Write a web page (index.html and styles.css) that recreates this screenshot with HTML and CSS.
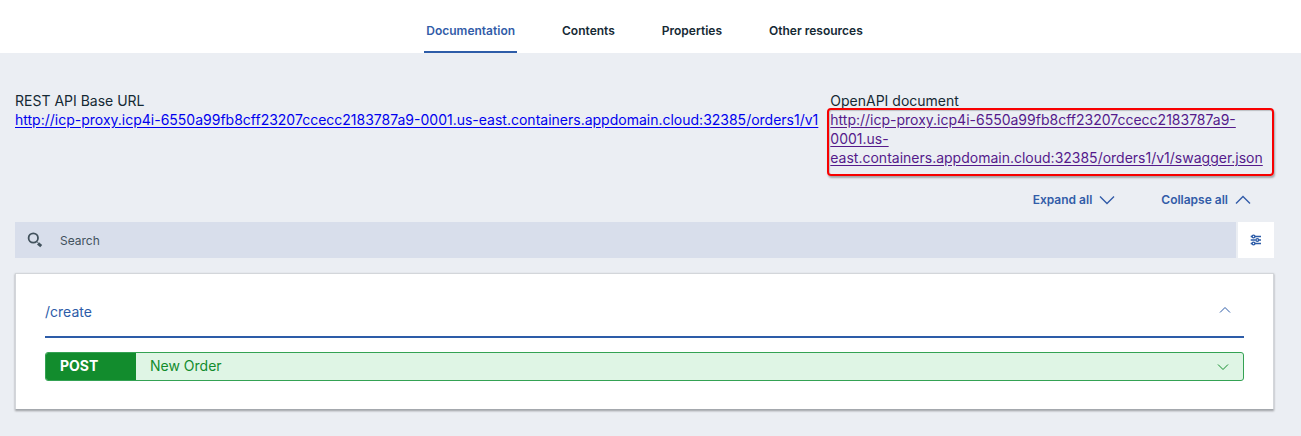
FILE: index.html
```html
<!DOCTYPE html>
<html lang="en">
<head>
<meta charset="utf-8">
<meta name="viewport" content="width=device-width, initial-scale=1">
<title>API documentation</title>
<link rel="stylesheet" href="styles.css">
</head>
<body>
<nav class="tabs" aria-label="Sections">
  <a class="tab tab-active" href="#documentation" aria-current="page">Documentation</a>
  <a class="tab" href="#contents">Contents</a>
  <a class="tab" href="#properties">Properties</a>
  <a class="tab" href="#resources">Other resources</a>
</nav>
<main class="content" id="documentation">
  <section class="urls">
    <div class="url-base">
      <div>REST API Base URL</div>
      <a class="link" href="#base">http://icp-proxy.icp4i-6550a99fb8cff23207ccecc2183787a9-0001.us-east.containers.appdomain.cloud:32385/orders1/v1</a>
    </div>
    <div class="url-doc">
      <div>OpenAPI document</div>
      <div class="highlighted">
        <a class="link link-visited" href="#swagger">http://icp-proxy.icp4i-6550a99fb8cff23207ccecc2183787a9-<wbr>0001.us-<wbr>east.containers.appdomain.cloud:32385/orders1/v1/swagger.json</a>
      </div>
    </div>
  </section>
  <div class="toolbar">
    <button class="text-button" type="button">Expand all
      <svg width="16" height="10" viewBox="0 0 16 10" aria-hidden="true"><path d="M1 1.5 8 8.5 15 1.5"/></svg>
    </button>
    <button class="text-button" type="button">Collapse all
      <svg width="16" height="10" viewBox="0 0 16 10" aria-hidden="true"><path d="M1 8.5 8 1.5 15 8.5"/></svg>
    </button>
  </div>
  <form class="search" role="search">
    <label class="search-field">
      <svg class="search-icon" width="16" height="16" viewBox="0 0 16 16" aria-hidden="true"><circle cx="6.3" cy="6" r="4.7"/><path class="neck" d="m9.600 9.400 1.400 1.400"/><path class="handle" d="m11 11.400 3.200 2.800"/></svg>
      <input class="search-input" type="text" placeholder="Search" aria-label="Search">
    </label>
    <button class="filter" type="button" aria-label="Filter">
      <svg width="12" height="12" viewBox="0 0 12 12" aria-hidden="true"><path d="M.7 2.500H2M5 2.500h6M.7 6h4.800M8.900 6h2.100M.7 9.500H2M5 9.500h6"/><circle cx="3.500" cy="2.500" r="1.400"/><circle cx="7.300" cy="6" r="1.400"/><circle cx="3.500" cy="9.500" r="1.400"/></svg>
    </button>
  </form>
  <section class="card">
    <button class="path" type="button" aria-expanded="true">/create
      <svg width="12" height="8" viewBox="0 0 12 8" aria-hidden="true"><path d="M1 6.500 6 1.500l5 5"/></svg>
    </button>
    <button class="operation" type="button" aria-expanded="false">
      <span class="method">POST</span>
      <span class="summary">New Order</span>
      <svg width="12" height="8" viewBox="0 0 12 8" aria-hidden="true"><path d="M1 1.500l5 5 5-5"/></svg>
    </button>
  </section>
</main>
</body>
</html>
```
FILE: styles.css
```css
* {
  box-sizing: border-box;
}

body {
  margin: 0;
  min-height: 100vh;
  background: #ebeef3;
  color: #152934;
  font: 14px/19px Inter, "Liberation Sans", sans-serif;
}

button {
  margin: 0;
  padding: 0;
  border: 0;
  background: none;
  color: inherit;
  font: inherit;
  text-align: left;
  cursor: pointer;
}

svg {
  flex: none;
  fill: none;
  stroke: currentColor;
}

.tabs {
  display: flex;
  justify-content: center;
  gap: 43px;
  padding: 8px 12px 0 0;
  background: #fff;
}

.tab {
  padding: 13px 2px 11px;
  border-bottom: 2px solid transparent;
  color: #152934;
  font-size: 12px;
  font-weight: 600;
  text-decoration: none;
}

.tab-active {
  border-color: #2d5ca8;
  color: #325ca8;
}

.content {
  padding: 38px 27px 26px 15px;
}

.urls {
  display: flex;
  gap: 12px;
}

.url-base {
  flex: none;
}

.url-doc {
  flex: 1;
  min-width: 0;
}

.link {
  color: #0000ee;
  text-decoration: underline;
  text-underline-offset: 2px;
}

.link-visited {
  color: #551a8b;
}

.highlighted {
  position: relative;
}

/* Red frame drawn over the link */
.highlighted::after {
  content: "";
  position: absolute;
  inset: -2px 0 -9px -3px;
  border: 2px solid #f80000;
  border-radius: 4px;
  box-shadow: 1px 2px 2px rgba(0, 0, 0, .3), inset 1px 1px 1px rgba(0, 0, 0, .2);
  pointer-events: none;
}

.toolbar {
  display: flex;
  justify-content: flex-end;
  gap: 46px;
  padding: 23px 23px 13px 0;
}

.text-button {
  display: flex;
  align-items: center;
  gap: 7px;
  color: #325ca8;
  font-size: 12px;
  font-weight: 600;
}

.text-button svg {
  stroke-width: 1.4;
}

.search {
  display: flex;
  gap: 2px;
  height: 36px;
}

.search-field {
  display: flex;
  flex: 1;
  align-items: center;
  gap: 17px;
  padding: 0 12px;
  background: #d8deeb;
  color: #42525d;
}

.search-icon {
  stroke-width: 1.8;
}

.search-icon .neck {
  stroke-width: 1;
}

.search-icon .handle {
  stroke-width: 3;
}

.search-input {
  flex: 1;
  min-width: 0;
  padding: 0;
  border: 0;
  outline: 0;
  background: none;
  color: inherit;
  font: inherit;
  font-size: 12px;
}

.search-input::placeholder {
  color: #42525d;
  opacity: 1;
}

.filter {
  display: flex;
  align-items: center;
  justify-content: center;
  width: 36px;
  background: #fff;
  color: #2d5ca8;
}

.filter svg {
  stroke-width: 1.4;
}

.card {
  margin-top: 15px;
  padding: 14px 29px 28px;
  border: 1px solid #d3d6da;
  border-bottom-color: #a4a8ad;
  background: #fff;
  box-shadow: 0 1px 2px rgba(0, 0, 0, .35);
}

.path {
  display: flex;
  align-items: flex-start;
  justify-content: space-between;
  width: 100%;
  padding: 14px 13px 15px 0;
  border-bottom: 2px solid #2d5ca8;
  color: #2d5ca8;
}

.path svg {
  margin-top: 4px;
}

.operation {
  display: flex;
  align-items: center;
  width: 100%;
  margin-top: 14px;
  padding-right: 14px;
  overflow: hidden;
  border: 1px solid #34a253;
  border-radius: 3px;
  background: #dff5e5;
  color: #128c2d;
}

.method {
  width: 90px;
  padding: 3px 14px 5px;
  background: #128c2d;
  color: #fff;
  font-weight: 700;
}

.summary {
  flex: 1;
  padding: 3px 0 5px 14px;
}
```
